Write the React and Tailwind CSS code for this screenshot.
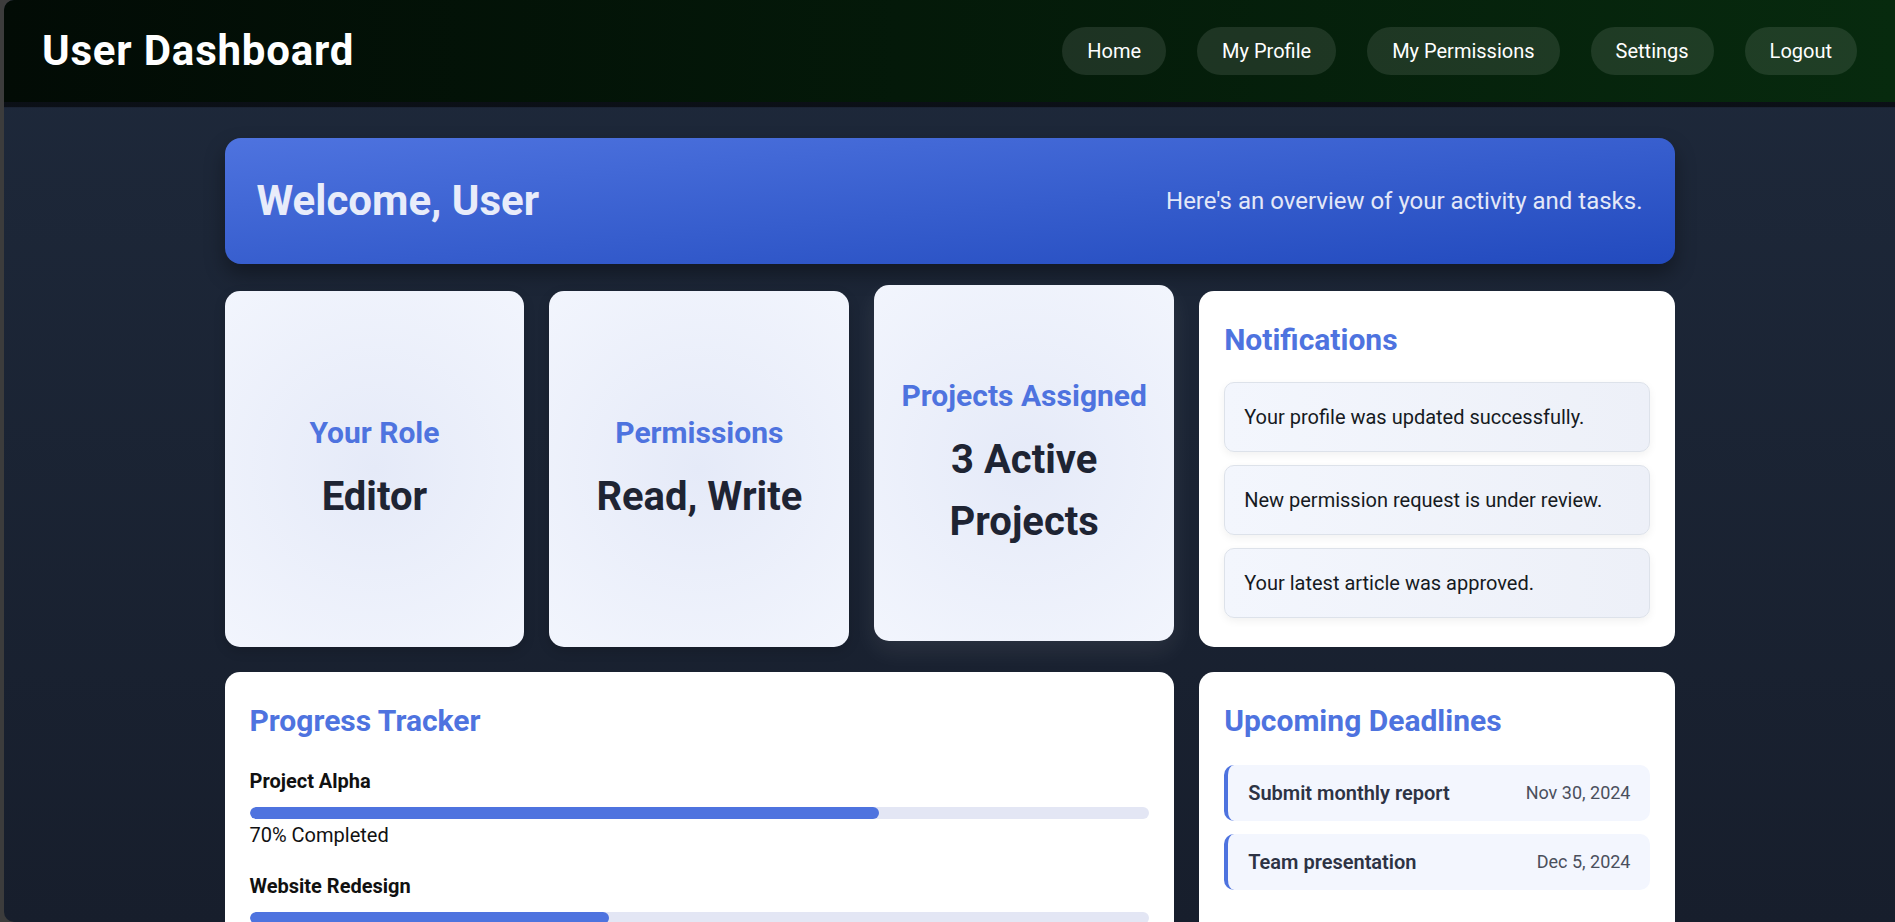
import React from 'react';

const navLinks = ['Home', 'My Profile', 'My Permissions', 'Settings', 'Logout'];

const stats = [
  { title: 'Your Role', value: 'Editor' },
  { title: 'Permissions', value: 'Read, Write' },
  { title: 'Projects Assigned', value: '3 Active Projects', lifted: true },
];

const notifications = [
  'Your profile was updated successfully.',
  'New permission request is under review.',
  'Your latest article was approved.',
];

const projects = [
  { name: 'Project Alpha', progress: 70 },
  { name: 'Website Redesign', progress: 40 },
];

const deadlines = [
  { task: 'Submit monthly report', date: 'Nov 30, 2024' },
  { task: 'Team presentation', date: 'Dec 5, 2024' },
];

function SectionTitle({ children, className = 'mb-[18px]' }) {
  return (
    <h3 className={`text-[30px] font-bold leading-[48px] text-[#4e73df] ${className}`}>{children}</h3>
  );
}

function App() {
  return (
    <div className="h-screen flex bg-[#3c3c3c] pl-[4px] font-['Roboto',sans-serif] text-[20px] leading-[1.6]">
      <div className="flex-1 rounded-l-[10px] overflow-y-auto [scrollbar-width:none] bg-gradient-to-b from-[#1e293b] to-[#171e2c]">
        {/* top bar */}
        <header className="h-[102px] flex items-center justify-between pl-[38px] pr-[38px] bg-gradient-to-r from-[#020b05] to-[#072a0e] shadow-[0_5px_1px_rgba(0,0,0,0.6)]">
          <h1 className="text-[42px] font-bold text-white tracking-[0.8px] leading-none">User Dashboard</h1>
          <nav className="flex gap-[31px]">
            {navLinks.map((link) => (
              <a
                key={link}
                href="#"
                className="h-[48px] px-[25px] flex items-center rounded-full bg-white/10 text-white text-[20px]"
              >
                {link}
              </a>
            ))}
          </nav>
        </header>

        <main className="max-w-[1450px] mx-auto pt-[36px] pb-10">
          {/* welcome banner */}
          <section className="h-[126px] px-[32px] flex items-center justify-between rounded-[16px] bg-gradient-to-br from-[#4e73df] to-[#224abe] shadow-[0_10px_20px_rgba(0,0,0,0.35)]">
            <h2 className="text-[42px] font-bold text-[#e8ecfa]">Welcome, User</h2>
            <p className="text-[24px] text-[#e3e8f8]">Here's an overview of your activity and tasks.</p>
          </section>

          <div className="mt-[27px] grid grid-cols-[repeat(3,minmax(0,1fr))_minmax(0,1.585fr)] gap-[25px]">
            {stats.map((s) => (
              <div
                key={s.title}
                className={`h-[356px] px-6 flex flex-col items-center justify-center text-center rounded-[15px] bg-[radial-gradient(circle,#e5eaf8_0%,#f2f5fd_100%)] shadow-[0_4px_12px_rgba(0,0,0,0.15)] ${s.lifted ? '-translate-y-[6px] shadow-[0_10px_24px_rgba(255,255,255,0.08)]' : ''}`}
              >
                <h3 className="text-[30px] font-bold leading-[46px] text-[#4e73df] mb-[10px]">{s.title}</h3>
                <p className="text-[40px] font-bold leading-[62px] text-[#1e2433]">{s.value}</p>
              </div>
            ))}

            <div className="h-[356px] rounded-[15px] bg-white p-[25px]">
              <SectionTitle>Notifications</SectionTitle>
              <div className="flex flex-col gap-[13px]">
                {notifications.map((n) => (
                  <div
                    key={n}
                    className="px-[19px] py-[18px] rounded-[10px] border border-[#dde2ea] bg-gradient-to-r from-[#f3f6fd] to-[#edf0f8] text-[#161a22] shadow-[0_3px_8px_rgba(0,0,0,0.06)]"
                  >
                    {n}
                  </div>
                ))}
              </div>
            </div>

            <div className="col-span-3 rounded-[15px] bg-white p-[25px]">
              <SectionTitle className="mb-[20px]">Progress Tracker</SectionTitle>
              <div className="flex flex-col gap-[19px]">
                {projects.map((p) => (
                  <div key={p.name}>
                    <div className="font-bold text-[#111]">{p.name}</div>
                    <div className="mt-[10px] h-[12px] rounded-full bg-[#e3e6f4] overflow-hidden">
                      <div className="h-full rounded-full bg-[#4e73df]" style={{ width: `${p.progress}%` }} />
                    </div>
                    <div className="text-[#111]">{p.progress}% Completed</div>
                  </div>
                ))}
              </div>
            </div>

            <div className="rounded-[15px] bg-white p-[25px]">
              <SectionTitle className="mb-[20px]">Upcoming Deadlines</SectionTitle>
              <div className="flex flex-col gap-[13px]">
                {deadlines.map((d) => (
                  <div
                    key={d.task}
                    className="flex items-center justify-between pl-[20px] pr-[19px] py-[12px] rounded-[10px] border-l-4 border-[#4e73df] bg-[#f3f6fe]"
                  >
                    <span className="font-semibold text-[#2d3344]">{d.task}</span>
                    <span className="text-[18px] text-[#4a4f5c]">{d.date}</span>
                  </div>
                ))}
              </div>
            </div>
          </div>
        </main>
      </div>
    </div>
  );
}

export default App;
